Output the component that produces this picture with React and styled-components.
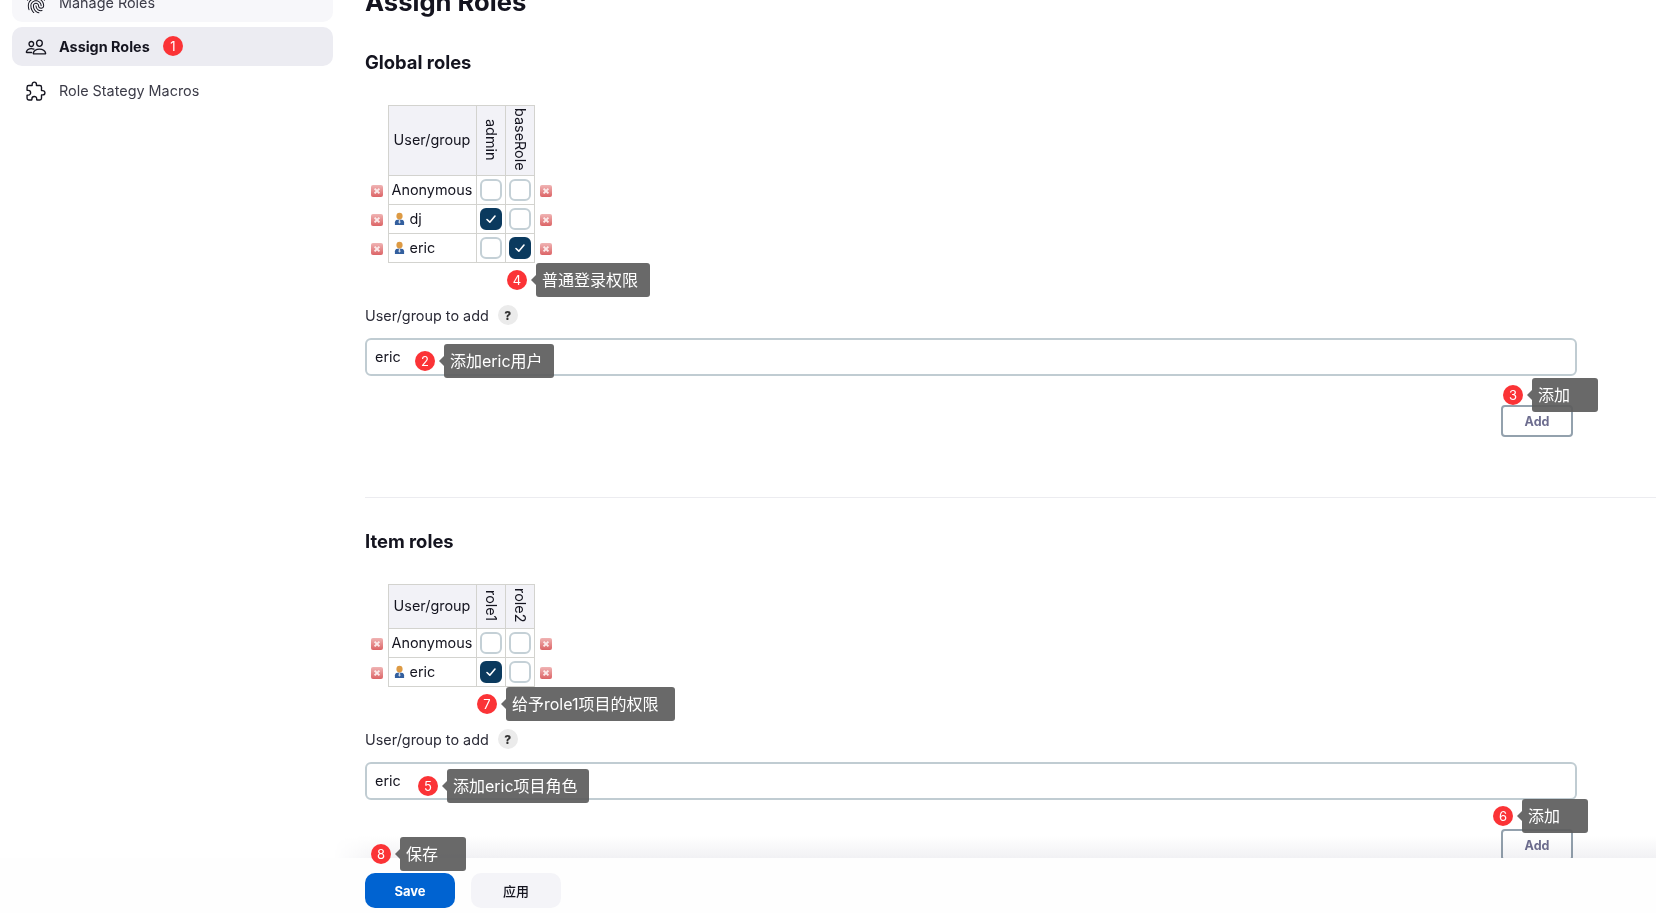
import React from "react";
import styled, { createGlobalStyle } from "styled-components";
import { IoPeopleOutline, IoFingerPrintOutline, IoExtensionPuzzleOutline } from "react-icons/io5";

const FONT = `Inter, "Noto Sans CJK SC", sans-serif`;

const Global = createGlobalStyle`
  html, body { margin: 0; padding: 0; background: #fff; overflow: hidden; }
  body { font-family: ${FONT}; color: #14141f; }
`;

const Page = styled.div`
  position: relative;
  width: 1656px;
  height: 913px;
  overflow: hidden;
`;
const Columns = styled.div`
  display: flex;
  margin-top: -17px;
`;
const Sidebar = styled.nav`
  width: 321px;
  margin-left: 12px;
  flex: none;
  display: flex;
  flex-direction: column;
  gap: 5px;
`;
const NavItem = styled.a`
  height: 39px;
  border-radius: 10px;
  display: flex;
  align-items: center;
  gap: 12px;
  padding-left: 13px;
  font-size: 14.4px;
  color: #3c3c48;
  font-weight: ${p => (p.$active ? 700 : 400)};
  background: ${p => p.$bg || "transparent"};
  ${p => p.$active && "color: #14141f;"}
  svg { width: 22px; height: 22px; color: #14141f; flex: none; }
`;
const Main = styled.main`
  margin-left: 32px;
  flex: 1;
  min-width: 0;
`;
const Title = styled.h1`
  margin: 0;
  height: 67px;
  padding-top: 4px;
  box-sizing: border-box;
  font-size: 25.6px;
  line-height: 30px;
  font-weight: 700;
`;
const SectionTitle = styled.h2`
  margin: 0 0 ${p => p.$gap}px;
  font-size: 18.4px;
  line-height: 24px;
  font-weight: 700;
`;
const Matrix = styled.table`
  border-collapse: collapse;
  font-size: 14.4px;
  color: #14141f;
`;
const HeadCell = styled.th`
  border: 1px solid #d3d3cf;
  background: #f2f2f7;
  font-weight: 400;
  padding: 0 0 2px;
  box-sizing: border-box;
  height: ${p => p.$h}px;
  width: ${p => p.$w}px;
`;
const VerticalLabel = styled.span`
  display: inline-block;
  writing-mode: vertical-rl;
  line-height: 24px;
  vertical-align: middle;
`;
const NameCell = styled.td`
  border: 1px solid #d3d3cf;
  height: 26px;
  padding: 0 1px 2px 3px;
  white-space: nowrap;
`;
const BoxCell = styled.td`
  border: 1px solid #d3d3cf;
  padding: 0;
  text-align: center;
  line-height: 0;
`;
const IconCell = styled.td`
  padding: 2px 0 0 ${p => p.$pad || 0}px;
  width: ${p => p.$w}px;
  box-sizing: border-box;
  line-height: 0;
`;
const DeleteMark = styled.span`
  display: inline-block;
  width: 12px;
  height: 12px;
  border-radius: 2px;
  line-height: 0;
  background: linear-gradient(#f0b4b4, #dc6466);
`;
const UserLabel = styled.span`
  display: inline-flex;
  align-items: center;
  gap: 5px;
  padding: 2px 0 0 2px;
`;
const Box = styled.span`
  display: inline-flex;
  align-items: center;
  justify-content: center;
  box-sizing: border-box;
  width: 22px;
  height: 22px;
  border-radius: 6px;
  border: 2px solid ${p => (p.$on ? "#0b3a5e" : "#c4d0d6")};
  background: ${p => (p.$on ? "#0b3a5e" : "#fff")};
`;
const LabelRow = styled.div`
  margin-top: ${p => p.$top}px;
  display: flex;
  align-items: center;
  gap: 9px;
  height: 20px;
  font-size: 14.4px;
  color: #2c2c38;
`;
const Help = styled.span`
  width: 20px;
  height: 20px;
  border-radius: 50%;
  background: #ebebeb;
  display: flex;
  align-items: center;
  justify-content: center;
  font-size: 12px;
  font-weight: 800;
  color: #333;
`;
const TextField = styled.input`
  display: block;
  box-sizing: border-box;
  width: 1212px;
  height: 38px;
  margin-top: 13px;
  padding: 0 8px 2px;
  border: 2px solid #c0ccd2;
  border-radius: 6px;
  font: 14.4px ${FONT};
  color: #14141f;
  background: #fff;
  outline: none;
`;
const AddRow = styled.div`
  width: 1208px;
  margin-top: ${p => p.$top}px;
  display: flex;
  justify-content: flex-end;
`;
const AddButton = styled.button`
  box-sizing: border-box;
  width: 72px;
  height: 32px;
  background: #fff;
  border: 2px solid #93a1ad;
  border-radius: 4px;
  font: 700 12.5px ${FONT};
  color: #6d6d8f;
  padding: 0;
`;
const Divider = styled.hr`
  border: 0;
  border-top: 1px solid #ececf0;
  margin: 60px 0 31px;
`;
const BottomBar = styled.div`
  position: absolute;
  left: 0;
  right: 0;
  bottom: 0;
  height: 55px;
  background: #fefefe;
  display: flex;
  gap: 16px;
  padding: 15px 0 0 365px;
  box-sizing: border-box;
  &::before {
    content: "";
    position: absolute;
    left: 333px;
    right: 0;
    top: -22px;
    height: 22px;
    background: linear-gradient(#fff, #f1f1f4);
    mix-blend-mode: multiply;
    mask-image: linear-gradient(to right, transparent, #000 50px);
  }
`;
const BarButton = styled.button`
  width: 90px;
  height: 35px;
  border: 0;
  padding: 0;
  border-radius: 10px;
  font: ${p => (p.$primary ? 700 : 500)} 13px ${FONT};
  background: ${p => (p.$primary ? "#0063d1" : "#f4f4f8")};
  color: ${p => (p.$primary ? "#fff" : "#14141f")};
`;
const Badge = styled.span`
  position: absolute;
  left: ${p => p.$x - 10}px;
  top: ${p => p.$y - 10}px;
  width: 20px;
  height: 20px;
  border-radius: 50%;
  background: #fb3336;
  color: #fff;
  font-size: 13px;
  display: flex;
  align-items: center;
  justify-content: center;
`;
const Note = styled.span`
  position: absolute;
  left: ${p => p.$x}px;
  top: ${p => p.$y}px;
  width: ${p => p.$w}px;
  height: 34px;
  box-sizing: border-box;
  padding-left: 6px;
  border-radius: 3px;
  background: rgba(92, 92, 92, 0.92);
  color: #fff;
  font-size: 16px;
  line-height: 34px;
  white-space: nowrap;
  &::before {
    content: "";
    position: absolute;
    left: -5px;
    top: 12px;
    border-style: solid;
    border-width: 5px 5px 5px 0;
    border-color: transparent rgba(92, 92, 92, 0.92) transparent transparent;
  }
`;

const Check = () => (
  <svg width="12" height="12" viewBox="0 0 12 12" fill="none" stroke="#fff" strokeWidth="1.6" strokeLinecap="round" strokeLinejoin="round">
    <path d="M2 6.5 4.8 9.2 10 3" />
  </svg>
);
const Cross = () => (
  <svg width="12" height="12" viewBox="0 0 12 12" stroke="#fbeaea" strokeWidth="2">
    <path d="M3.6 3.6 8.4 8.4M8.4 3.6 3.6 8.4" />
  </svg>
);
const Person = () => (
  <svg width="11" height="13" viewBox="0 0 12 14">
    <path d="M1 14V11C1 9 3 8.2 6 8.2S11 9 11 11V14Z" fill="#335f9e" />
    <ellipse cx="6" cy="4.4" rx="3.4" ry="3.8" fill="#dd9a44" />
    <path d="M5.4 8.4h1.2l.4 3-1 1.2-1-1.2Z" fill="#cfd8e6" />
  </svg>
);

const RoleMatrix = ({ headH, roles, rows }) => (
  <Matrix>
    <thead>
      <tr>
        <IconCell $w={23} />
        <HeadCell $w={88} $h={headH}>User/group</HeadCell>
        {roles.map(r => (
          <HeadCell key={r} $w={29} $h={headH}><VerticalLabel>{r}</VerticalLabel></HeadCell>
        ))}
        <IconCell $w={22} />
      </tr>
    </thead>
    <tbody>
      {rows.map(row => (
        <tr key={row.name}>
          <IconCell $w={23} $pad={6}><DeleteMark><Cross /></DeleteMark></IconCell>
          <NameCell>
            {row.user ? <UserLabel><Person />{row.name}</UserLabel> : row.name}
          </NameCell>
          {row.checks.map((c, i) => (
            <BoxCell key={i}><Box $on={c}>{c && <Check />}</Box></BoxCell>
          ))}
          <IconCell $w={22} $pad={5}><DeleteMark><Cross /></DeleteMark></IconCell>
        </tr>
      ))}
    </tbody>
  </Matrix>
);

const notes = [
  { n: 1, bx: 173, by: 46 },
  { n: 2, bx: 425, by: 361, x: 444, y: 344, w: 110, t: "添加eric用户" },
  { n: 3, bx: 1513, by: 395, x: 1532, y: 378, w: 66, t: "添加" },
  { n: 4, bx: 517, by: 280, x: 536, y: 263, w: 114, t: "普通登录权限" },
  { n: 5, bx: 428, by: 786, x: 447, y: 769, w: 142, t: "添加eric项目角色" },
  { n: 6, bx: 1503, by: 816, x: 1522, y: 799, w: 66, t: "添加" },
  { n: 7, bx: 487, by: 704, x: 506, y: 687, w: 169, t: "给予role1项目的权限" },
  { n: 8, bx: 381, by: 854, x: 400, y: 837, w: 66, t: "保存" },
];

export default function App() {
  return (
    <Page>
      <Global />
      <Columns>
        <Sidebar>
          <NavItem $bg="#f7f7fa"><IoFingerPrintOutline />Manage Roles</NavItem>
          <NavItem $active $bg="#ececf2"><IoPeopleOutline />Assign Roles</NavItem>
          <NavItem><IoExtensionPuzzleOutline />Role Stategy Macros</NavItem>
        </Sidebar>
        <Main>
          <Title>Assign Roles</Title>
          <SectionTitle $gap={31}>Global roles</SectionTitle>
          <RoleMatrix
            headH={70}
            roles={["admin", "baseRole"]}
            rows={[
              { name: "Anonymous", checks: [false, false] },
              { name: "dj", user: true, checks: [true, false] },
              { name: "eric", user: true, checks: [false, true] },
            ]}
          />
          <LabelRow $top={42}>User/group to add <Help>?</Help></LabelRow>
          <TextField readOnly value="eric" />
          <AddRow $top={29}><AddButton>Add</AddButton></AddRow>
          <Divider />
          <SectionTitle $gap={31}>Item roles</SectionTitle>
          <RoleMatrix
            headH={44}
            roles={["role1", "role2"]}
            rows={[
              { name: "Anonymous", checks: [false, false] },
              { name: "eric", user: true, checks: [true, false] },
            ]}
          />
          <LabelRow $top={42}>User/group to add <Help>?</Help></LabelRow>
          <TextField readOnly value="eric" />
          <AddRow $top={29}><AddButton>Add</AddButton></AddRow>
        </Main>
      </Columns>
      <BottomBar>
        <BarButton $primary>Save</BarButton>
        <BarButton>应用</BarButton>
      </BottomBar>
      {notes.map(a => (
        <React.Fragment key={a.n}>
          <Badge $x={a.bx} $y={a.by}>{a.n}</Badge>
          {a.t && <Note $x={a.x} $y={a.y} $w={a.w}>{a.t}</Note>}
        </React.Fragment>
      ))}
    </Page>
  );
}
